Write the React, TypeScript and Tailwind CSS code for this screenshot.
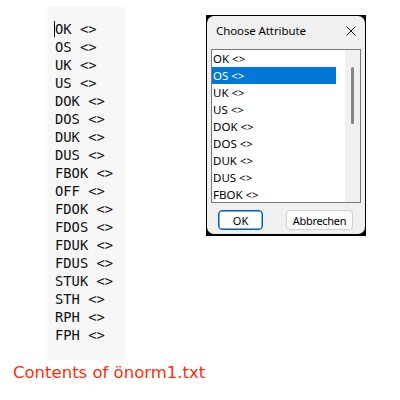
import React from "react";

const lines = [
  "OK <>", "OS <>", "UK <>", "US <>", "DOK <>", "DOS <>", "DUK <>", "DUS <>",
  "FBOK <>", "OFF <>", "FDOK <>", "FDOS <>", "FDUK <>", "FDUS <>", "STUK <>",
  "STH <>", "RPH <>", "FPH <>",
];

const items = ["OK <>", "OS <>", "UK <>", "US <>", "DOK <>", "DOS <>", "DUK <>", "DUS <>", "FBOK <>"];

export default function App() {
  return (
    <div className="relative w-[400px] h-[400px] bg-white overflow-hidden">
      <div className="ml-[47px] pt-[7px]">
        <div className="w-[78px] h-[353px] bg-[#f7f7f7] pt-[13px] pl-[8px] text-[#111] whitespace-pre text-[13.8px] leading-[18px] [font-family:'DejaVu_Sans_Mono',monospace]">
          {lines.map((l, i) => (
            <div key={i} className="relative h-[18px]">
              {i === 0 && <span className="absolute left-[-1px] top-[1px] w-[1px] h-[16px] bg-black" />}
              {l}
            </div>
          ))}
        </div>
      </div>
      <div className="ml-[13px] mt-[4px] text-[16.5px] leading-[18px] text-[#fa2d0a] [font-family:'DejaVu_Sans',Verdana,sans-serif]">
        Contents of önorm1.txt
      </div>

      <div className="absolute left-[206px] top-[15px] w-[160px] h-[221px] bg-black">
        <div className="ml-[1px] mt-[1px] w-[158px] h-[218px] rounded-[7px] bg-[#f0f0f0] [font-family:'Noto_Sans',sans-serif] text-black">
          <div className="h-[30px] flex items-center justify-between pl-[9px] pr-[9px]">
            <span className="text-[11.5px] leading-none tracking-[-0.1px]">Choose Attribute</span>
            <svg width="10" height="10" viewBox="0 0 10 10">
              <path d="M0.5 0.5 L9.5 9.5 M9.5 0.5 L0.5 9.5" stroke="#1a1a1a" strokeWidth="1" />
            </svg>
          </div>
          <div className="mt-[3px] ml-[4px] w-[150px] h-[154px] border border-[#7a7a7a] bg-white flex">
            <div className="flex-1 flex flex-col">
              {items.map((it, i) => (
                <div
                  key={i}
                  className={
                    "h-[17px] w-[124px] pl-[1px] text-[11.5px] leading-[17px] " +
                    (i === 1 ? "bg-[#0078d7] text-white" : "text-black")
                  }
                >
                  {it}
                </div>
              ))}
            </div>
            <div className="w-[15px] bg-[#f0f0f0] flex justify-center">
              <div className="mt-[17px] w-[3px] h-[57px] rounded-full bg-[#858585]" />
            </div>
          </div>
          <div className="mt-[7px] ml-[11px] flex gap-[23px]">
            <div className="w-[45px] h-[20px] rounded-[4px] border border-[#005fb8] shadow-[inset_0_0_0_0.5px_#005fb8] bg-[#fdfdfd] flex items-center justify-center text-[11px] leading-none">
              OK
            </div>
            <div className="w-[67px] h-[20px] rounded-[4px] border border-[#d0d0d0] bg-[#fdfdfd] flex items-center justify-center text-[11px] leading-none tracking-[-0.3px]">
              Abbrechen
            </div>
          </div>
        </div>
      </div>
    </div>
  );
}
